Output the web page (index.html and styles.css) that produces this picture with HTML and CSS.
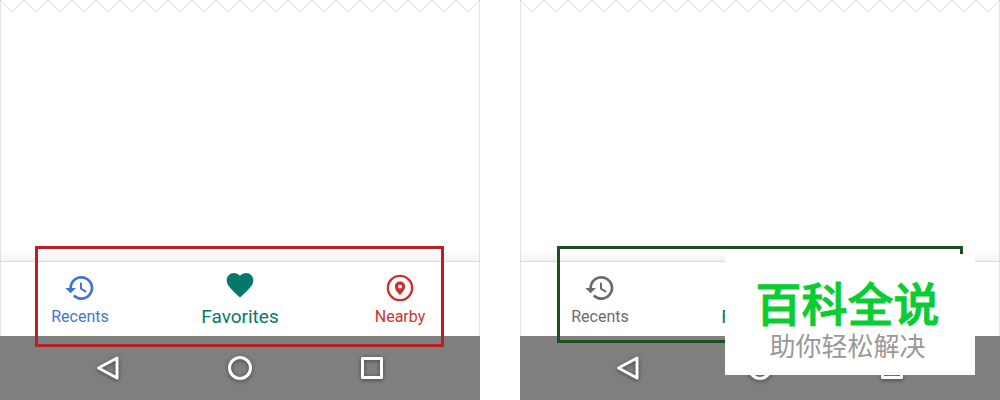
FILE: index.html
```html
<!doctype html>
<html lang="en">
<head>
  <meta charset="utf-8">
  <title>Bottom navigation</title>
  <link rel="stylesheet" href="styles.css">
</head>

<body>

  <!-- shared icons -->
  <svg class="sprite" aria-hidden="true">
    <symbol id="history" viewBox="0 0 24 24">
      <path d="M13 3a9 9 0 0 0-9 9H1l3.9 3.9.1.1L9 12H6a7 7 0 1 1 2.06 4.94l-1.42 1.42A9 9 0 1 0 13 3zm-1 5v5l4.28 2.54.72-1.21-3.5-2.08V8H12z"/>
    </symbol>
    <symbol id="heart" viewBox="0 0 24 24">
      <path d="M12 21.35l-1.45-1.32C5.4 15.36 2 12.28 2 8.5 2 5.42 4.42 3 7.5 3c1.74 0 3.41.81 4.5 2.09C13.09 3.81 14.76 3 16.5 3 19.58 3 22 5.42 22 8.5c0 3.78-3.4 6.86-8.55 11.54L12 21.35z"/>
    </symbol>
    <symbol id="nearby" viewBox="0 0 24 24">
      <circle cx="12" cy="12" r="9.1" fill="none" stroke="currentColor" stroke-width="1.8"/>
      <path fill-rule="evenodd" d="M12 7a3.9 3.9 0 0 0-3.9 3.9C8.1 13.8 12 17.4 12 17.4s3.9-3.6 3.9-6.5A3.9 3.9 0 0 0 12 7zm0 2.5a1.4 1.4 0 1 1 0 2.8 1.4 1.4 0 0 1 0-2.8z"/>
    </symbol>
    <symbol id="back" viewBox="0 0 24 24">
      <path d="M21 2v20L2.500 12z" fill="none" stroke="currentColor" stroke-width="3" stroke-linejoin="round"/>
    </symbol>
    <symbol id="home" viewBox="0 0 24 24">
      <circle cx="12" cy="12" r="10.500" fill="none" stroke="currentColor" stroke-width="3"/>
    </symbol>
    <symbol id="overview" viewBox="0 0 24 24">
      <rect x="2.500" y="2.500" width="19" height="19" fill="none" stroke="currentColor" stroke-width="3" stroke-linejoin="round"/>
    </symbol>
    <pattern id="teeth" width="24" height="14" patternUnits="userSpaceOnUse">
      <path d="M0 0l12 12L24 0" fill="none" stroke="#dedede"/>
    </pattern>
  </svg>

  <main class="examples">

    <section class="phone">
      <div class="screen">
        <svg class="torn-edge"><rect width="100%" height="14" fill="url(#teeth)"/></svg>
        <nav class="tabs">
          <button class="tab blue"><svg><use href="#history"/></svg><span>Recents</span></button>
          <button class="tab active"><svg><use href="#heart"/></svg><span>Favorites</span></button>
          <button class="tab red"><svg><use href="#nearby"/></svg><span>Nearby</span></button>
        </nav>
      </div>
      <div class="system-bar">
        <button aria-label="Back"><svg><use href="#back"/></svg></button>
        <button aria-label="Home"><svg><use href="#home"/></svg></button>
        <button aria-label="Overview"><svg><use href="#overview"/></svg></button>
      </div>
      <div class="outline dont"></div>
    </section>

    <section class="phone">
      <div class="screen">
        <svg class="torn-edge"><rect width="100%" height="14" fill="url(#teeth)"/></svg>
        <nav class="tabs">
          <button class="tab"><svg><use href="#history"/></svg><span>Recents</span></button>
          <button class="tab active"><svg><use href="#heart"/></svg><span>Favorites</span></button>
          <button class="tab"><svg><use href="#nearby"/></svg><span>Nearby</span></button>
        </nav>
      </div>
      <div class="system-bar">
        <button aria-label="Back"><svg><use href="#back"/></svg></button>
        <button aria-label="Home"><svg><use href="#home"/></svg></button>
        <button aria-label="Overview"><svg><use href="#overview"/></svg></button>
      </div>
      <div class="outline do"></div>
      <div class="watermark" lang="zh">
        <strong>百科全说</strong>
        <span>助你轻松解决</span>
      </div>
    </section>

  </main>

</body>

</html>
```

FILE: styles.css
```css
body {
  margin: 0;
  background: #fff;
  font-family: Roboto, "Noto Sans CJK SC", sans-serif;
}

.sprite {
  position: absolute;
  width: 0;
  height: 0;
}

.examples {
  display: flex;
  gap: 4%;
  min-height: 100vh;
}

.phone {
  position: relative;
  flex: 1;
  display: flex;
  flex-direction: column;
}

.screen {
  flex: 1;
  display: flex;
  flex-direction: column;
  justify-content: space-between;
  box-shadow: inset 1px 0 #e4e4e4, inset -1px 0 #e4e4e4;
  overflow: hidden;
}

.torn-edge {
  display: block;
  width: 100%;
  height: 14px;
}

/* app tabs */
.tabs {
  display: flex;
  border-top: 1px solid #dcdcdc;
  box-shadow: 0 -2px 10px rgba(0, 0, 0, 0.09);
}

.tab {
  flex: 1;
  display: flex;
  flex-direction: column;
  align-items: center;
  justify-content: flex-end;
  gap: 3px;
  height: 74px;
  padding: 0 0 9px;
  border: none;
  background: none;
  color: #6b6b6b;
  font-family: inherit;
  font-size: 16px;
  line-height: 20px;
  cursor: pointer;
}

.tab svg {
  width: 32px;
  height: 32px;
  fill: currentColor;
}

.tab.active {
  gap: 6px;
  color: #04796a;
  font-size: 19px;
}

.blue {
  color: #3f74d1;
}

.red {
  color: #c7362f;
}

/* android system buttons */
.system-bar {
  display: flex;
  justify-content: space-between;
  align-items: center;
  height: 64px;
  padding: 0 20%;
  background: #7f7f7f;
}

.system-bar button {
  display: flex;
  padding: 0;
  border: none;
  background: none;
  color: #fff;
  cursor: pointer;
}

.system-bar svg {
  width: 24px;
  height: 24px;
  filter: drop-shadow(0 1px 2px rgba(0, 0, 0, 0.5));
}

/* frames over the tab bar */
.outline {
  position: absolute;
  left: 35px;
  right: 36px;
  bottom: 53px;
  height: 95px;
  border: 3px solid #b92025;
}

.outline.do {
  left: 37px;
  right: 37px;
  bottom: 57px;
  height: 91px;
  border-color: #1d4f20;
}

.watermark {
  position: absolute;
  right: 25px;
  bottom: 25px;
  display: flex;
  flex-direction: column;
  align-items: center;
  width: 250px;
  padding: 20px 5px 14px 0;
  box-sizing: border-box;
  background: #fff;
  color: #999;
  font-family: "Noto Sans CJK SC", sans-serif;
  font-size: 26px;
  line-height: 33px;
}

.watermark strong {
  color: #0acc33;
  font-size: 46px;
  font-weight: 500;
  line-height: 54px;
  -webkit-text-stroke: 1px #0acc33;
}
```
